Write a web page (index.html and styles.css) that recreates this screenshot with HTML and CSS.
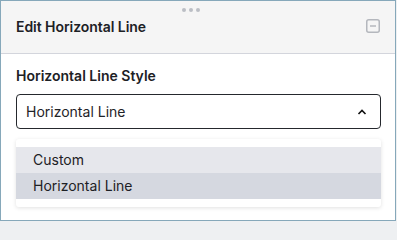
FILE: index.html
```html
<!DOCTYPE html>
<html>
<head>
<meta charset="utf-8">
<link rel="stylesheet" href="styles.css">
</head>
<body>
<div class="panel">
  <div class="header">
    <span class="grip"><i></i><i></i><i></i></span>
    <h1 class="title">Edit Horizontal Line</h1>
    <svg class="collapse" width="14" height="14" viewBox="0 0 14 14"><rect x="0.75" y="0.75" width="12.5" height="12.5" rx="2" fill="none" stroke="#b4b7bd" stroke-width="1.5"/><line x1="4" y1="7" x2="10" y2="7" stroke="#b4b7bd" stroke-width="1.5"/></svg>
  </div>
  <div class="body">
    <label class="label">Horizontal Line Style</label>
    <div class="select">
      <span class="value">Horizontal Line</span>
      <svg class="chev" width="10" height="6" viewBox="0 0 10 6"><path d="M1.5 5L5 1.5L8.5 5" fill="none" stroke="#111" stroke-width="1.6"/></svg>
    </div>
    <ul class="menu">
      <li class="opt hover">Custom</li>
      <li class="opt selected">Horizontal Line</li>
    </ul>
  </div>
</div>
</body>
</html>
```
FILE: styles.css
```css
html, body {
  margin: 0;
  padding: 0;
  background: #eef0f2;
}
body {
  font-family: Inter, "Noto Sans", sans-serif;
  color: #1f2328;
}
.panel {
  box-sizing: border-box;
  width: 396px;
  height: 221px;
  border: 1px solid #86a8ba;
  background: #fff;
  overflow: hidden;
}
.header {
  position: relative;
  height: 53px;
  box-sizing: border-box;
  background: #f5f5f5;
  border-bottom: 1px solid #d3d5dc;
  display: flex;
  align-items: center;
  justify-content: space-between;
  padding: 0 15px 2px 15px;
}
.grip {
  position: absolute;
  left: 181px;
  top: 7px;
  display: flex;
  gap: 3px;
}
.grip i {
  width: 4px;
  height: 4px;
  border-radius: 50%;
  background: #bbbec5;
}
.title {
  margin: 0;
  font-size: 14px;
  font-weight: 600;
  letter-spacing: -0.05px;
  color: #1d2125;
}
.collapse {
  display: block;
}
.body {
  padding: 13px 14px 0 15px;
}
.label {
  display: block;
  font-size: 14px;
  font-weight: 600;
  color: #1d2125;
  line-height: 17px;
  margin-bottom: 10px;
}
.select {
  box-sizing: border-box;
  height: 35px;
  border: 1px solid #25282d;
  border-radius: 4px;
  display: flex;
  align-items: center;
  justify-content: space-between;
  padding: 0 13px 0 9px;
  font-size: 14px;
}
.chev { display: block; }
.menu {
  list-style: none;
  margin: 10px 0 0 0;
  padding: 8px 0;
  background: #fff;
  border-radius: 3px;
  box-shadow: 0 1px 4px rgba(0, 0, 0, 0.12);
}
.opt {
  height: 26px;
  line-height: 26px;
  padding-left: 17px;
  font-size: 14px;
  color: #1d2125;
}
.opt.hover { background: #e6e7ec; }
.opt.selected { background: #d5d8e0; }
```
